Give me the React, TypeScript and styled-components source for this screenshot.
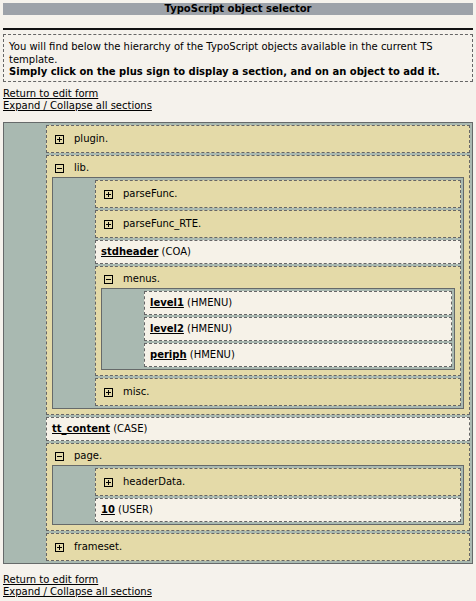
import React, { useState } from "react";
import styled, { createGlobalStyle } from "styled-components";

const GlobalStyle = createGlobalStyle`
  html, body {
    margin: 0;
    padding: 0;
    background: #f5f2ec;
  }
  body {
    margin: 3px;
    font-family: "DejaVu Sans", Verdana, sans-serif;
    font-size: 10px;
    color: #000;
  }
`;

const Page = styled.div`
  display: flex;
  flex-direction: column;
`;

const TitleBar = styled.h1`
  margin: 0;
  height: 12px;
  line-height: 12px;
  background: #9da2a9;
  text-align: center;
  font-size: 10px;
  font-weight: bold;
`;

const Rule = styled.div`
  margin-top: 13px;
  height: 2px;
  background: #111;
`;

const InfoBox = styled.div`
  margin-top: 4px;
  border: 1px dashed #666;
  padding: 6px 5px 2px 5px;
  line-height: 12.5px;
`;

const Strong = styled.strong`
  font-weight: bold;
`;

const LinkList = styled.div<{ $top: number }>`
  margin-top: ${(p) => p.$top}px;
  display: flex;
  flex-direction: column;
  line-height: 12px;
`;

const TextLink = styled.a`
  color: #000;
  text-decoration: underline;
  align-self: flex-start;
  cursor: pointer;
`;

const TreeBox = styled.div<{ $outer?: boolean }>`
  margin-top: ${(p) => (p.$outer ? 10 : 0)}px;
  border: 1px solid #666a6a;
  background: #a9b9b1;
  padding: 2px 2px 2px 42px;
  display: flex;
  flex-direction: column;
  gap: 2px;
`;

const FolderItem = styled.div<{ $open: boolean }>`
  border: 1px dashed #666;
  background: #e4daa8;
  padding: ${(p) => (p.$open ? "3px 5px 5px 5px" : "4px 5px")};
`;

const FolderRow = styled.div`
  display: flex;
  align-items: center;
  height: 18px;
  cursor: pointer;
`;

const IconWrap = styled.span`
  display: flex;
  margin: 2px 10px 0 3px;
`;

const ObjectItem = styled.div`
  border: 1px dashed #666;
  background: #f6f2e8;
  padding: 3px 5px;
  line-height: 16px;
`;

const ObjectKey = styled.a`
  color: #000;
  font-weight: bold;
  text-decoration: underline;
  cursor: pointer;
`;

type TNode =
  | { kind: "folder"; id: string; label: string; children?: TNode[] }
  | { kind: "object"; id: string; name: string; type: string };

const tree: TNode[] = [
  { kind: "folder", id: "plugin", label: "plugin.", children: [] },
  {
    kind: "folder",
    id: "lib",
    label: "lib.",
    children: [
      { kind: "folder", id: "lib.parseFunc", label: "parseFunc.", children: [] },
      { kind: "folder", id: "lib.parseFunc_RTE", label: "parseFunc_RTE.", children: [] },
      { kind: "object", id: "lib.stdheader", name: "stdheader", type: "COA" },
      {
        kind: "folder",
        id: "lib.menus",
        label: "menus.",
        children: [
          { kind: "object", id: "lib.menus.level1", name: "level1", type: "HMENU" },
          { kind: "object", id: "lib.menus.level2", name: "level2", type: "HMENU" },
          { kind: "object", id: "lib.menus.periph", name: "periph", type: "HMENU" },
        ],
      },
      { kind: "folder", id: "lib.misc", label: "misc.", children: [] },
    ],
  },
  { kind: "object", id: "tt_content", name: "tt_content", type: "CASE" },
  {
    kind: "folder",
    id: "page",
    label: "page.",
    children: [
      { kind: "folder", id: "page.headerData", label: "headerData.", children: [] },
      { kind: "object", id: "page.10", name: "10", type: "USER" },
    ],
  },
  { kind: "folder", id: "frameset", label: "frameset.", children: [] },
];

const ToggleIcon = ({ open }: { open: boolean }) => (
  <svg width="9" height="9" viewBox="0 0 9 9" shapeRendering="crispEdges">
    <rect x="0.5" y="0.5" width="8" height="8" fill="none" stroke="#000" strokeWidth="1" />
    <line x1="2" y1="4.5" x2="7" y2="4.5" stroke="#000" strokeWidth="1" />
    {!open && <line x1="4.5" y1="2" x2="4.5" y2="7" stroke="#000" strokeWidth="1" />}
  </svg>
);

const Nodes = ({
  nodes,
  openSet,
  toggle,
}: {
  nodes: TNode[];
  openSet: Set<string>;
  toggle: (id: string) => void;
}) => (
  <>
    {nodes.map((n) => {
      if (n.kind === "object") {
        return (
          <ObjectItem key={n.id}>
            <ObjectKey>{n.name}</ObjectKey> ({n.type})
          </ObjectItem>
        );
      }
      const open = openSet.has(n.id);
      return (
        <FolderItem key={n.id} $open={open && !!n.children?.length}>
          <FolderRow onClick={() => toggle(n.id)}>
            <IconWrap>
              <ToggleIcon open={open} />
            </IconWrap>
            {n.label}
          </FolderRow>
          {open && n.children && n.children.length > 0 && (
            <TreeBox>
              <Nodes nodes={n.children} openSet={openSet} toggle={toggle} />
            </TreeBox>
          )}
        </FolderItem>
      );
    })}
  </>
);

const collectAll = (nodes: TNode[], acc: string[] = []): string[] => {
  nodes.forEach((n) => {
    if (n.kind === "folder") {
      acc.push(n.id);
      if (n.children) collectAll(n.children, acc);
    }
  });
  return acc;
};

const Links = ({ top, onToggleAll }: { top: number; onToggleAll: () => void }) => (
  <LinkList $top={top}>
    <TextLink>Return to edit form</TextLink>
    <TextLink onClick={onToggleAll}>Expand / Collapse all sections</TextLink>
  </LinkList>
);

export default function App() {
  const [openSet, setOpenSet] = useState<Set<string>>(
    new Set(["lib", "lib.menus", "page"])
  );
  const toggle = (id: string) =>
    setOpenSet((prev) => {
      const next = new Set(prev);
      if (next.has(id)) next.delete(id);
      else next.add(id);
      return next;
    });
  const toggleAll = () =>
    setOpenSet((prev) => (prev.size ? new Set() : new Set(collectAll(tree))));

  return (
    <Page>
      <GlobalStyle />
      <TitleBar>TypoScript object selector</TitleBar>
      <Rule />
      <InfoBox>
        You will find below the hierarchy of the TypoScript objects available in the current TS template.
        <br />
        <Strong>Simply click on the plus sign to display a section, and on an object to add it.</Strong>
      </InfoBox>
      <Links top={6} onToggleAll={toggleAll} />
      <TreeBox $outer>
        <Nodes nodes={tree} openSet={openSet} toggle={toggle} />
      </TreeBox>
      <Links top={10} onToggleAll={toggleAll} />
    </Page>
  );
}
